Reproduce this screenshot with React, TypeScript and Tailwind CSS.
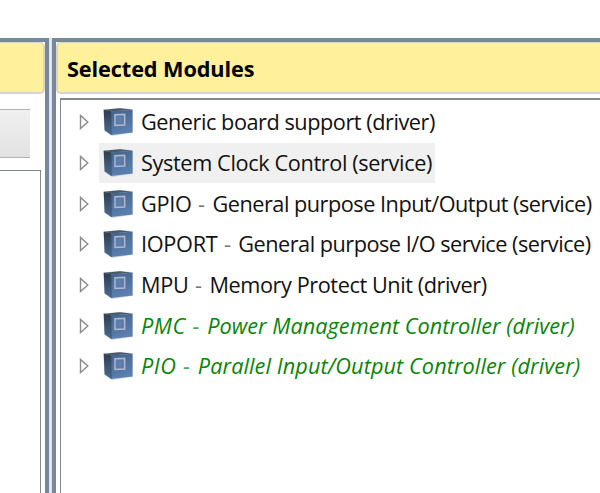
type Module = { code?: string; name: string; tracking: string; selected?: boolean; dependency?: boolean };

const modules: Module[] = [
  { name: "Generic board support (driver)", tracking: "tracking-[-0.46px]" },
  { name: "System Clock Control (service)", tracking: "tracking-[-0.37px]", selected: true },
  { code: "GPIO", name: "General purpose Input/Output (service)", tracking: "tracking-[-0.49px]" },
  { code: "IOPORT", name: "General purpose I/O service (service)", tracking: "tracking-[-0.5px]" },
  { code: "MPU", name: "Memory Protect Unit (driver)", tracking: "tracking-[-0.42px]" },
  { code: "PMC", name: "Power Management Controller (driver)", tracking: "tracking-[0.02px]", dependency: true },
  { code: "PIO", name: "Parallel Input/Output Controller (driver)", tracking: "tracking-[0.08px]", dependency: true },
];

function Expander() {
  return (
    <svg className="block h-4 w-[10px] shrink-0" viewBox="0 0 10 16">
      <path d="M1.5 1.4V14.5L8.8 7.9Z" fill="#fff" stroke="#8c8c8c" strokeWidth="1.4" />
    </svg>
  );
}

function ModuleIcon() {
  return (
    <svg className="block h-[30px] w-[30px] shrink-0" viewBox="0 0 30 30">
      <defs>
        <linearGradient id="front" x1="0" y1="0" x2="0.3" y2="1">
          <stop offset="0" stopColor="#42638b" />
          <stop offset="1" stopColor="#5b80b0" />
        </linearGradient>
        <linearGradient id="side" x1="0" y1="0" x2="0" y2="1">
          <stop offset="0" stopColor="#303d4e" />
          <stop offset="1" stopColor="#496b93" />
        </linearGradient>
      </defs>
      <path d="M0.4 2.4L17 0.8L30 2.2V25.8L9 29L1.3 24Z" fill="#aeb9c6" opacity=".6" />
      <path d="M0.7 2.8L17 1.3L29.4 2.7L8 4.6Z" fill="#4a5868" />
      <path d="M0.7 2.8L8.2 4.2V28L1.6 23.2Z" fill="url(#side)" />
      <path d="M8 4.3L29.5 2.7V25.4L8 28.1Z" fill="url(#front)" />
      <path d="M8.2 5V27.5" stroke="#3b5675" strokeWidth=".8" />
      <path d="M11.9 7.7L21.7 7.2V18L11.9 18.5Z" fill="#6484b0" stroke="#b0b7cf" strokeWidth="1.4" />
      <path d="M14 9.9L19.7 9.6V15.9L14 16.2Z" fill="#5c80b0" stroke="#58739d" strokeWidth=".8" />
    </svg>
  );
}

function ModuleRow({ code, name, tracking, selected, dependency }: Module) {
  return (
    <li className="flex h-[40.67px] items-center pl-[17px]">
      <Expander />
      <div className={`ml-[10px] flex h-full items-center pl-1 ${selected ? "bg-[#f0f0f0] pr-[3px]" : ""}`}>
        <ModuleIcon />
        <div className={`ml-[8px] whitespace-pre text-[21.7px] leading-[40px] ${dependency ? "italic text-[#078507]" : "text-[#111]"}`}>
          {code && (
            <>
              <span className={dependency ? "tracking-[0.5px]" : "tracking-[-0.3px]"}>{code}</span>
              <span className={dependency ? "tracking-[1.15px] text-[#4fa84f]" : "tracking-[0.9px] text-[#777]"}>{" - "}</span>
            </>
          )}
          <span className={tracking}>{name}</span>
        </div>
      </div>
    </li>
  );
}

export default function App() {
  return (
    <div className="h-[493px] w-[600px] overflow-hidden bg-white pt-[38px] font-['Open_Sans','Noto_Sans',sans-serif]">
      <div className="flex h-[455px] bg-[#e3e4eb]">
        <section className="flex w-[49px] shrink-0 flex-col border-r-4 border-t-4 border-[#778899] bg-white">
          <header className="h-[52px] shrink-0 rounded-r-[5px] border-b-2 border-r-2 border-t border-[#d5d5ce] bg-[#fff09c]" />
          <div className="mt-[15px] h-[49px] w-[30px] shrink-0 border-y border-[#b2b2b2] bg-linear-to-b from-[#f0f0f0] to-[#e2e2e2]" />
          <div className="mt-3 w-[41px] flex-1 border-r-[1.5px] border-t-[1.5px] border-[#828790]" />
        </section>
        <section className="ml-[3px] flex min-w-0 flex-1 flex-col border-l-4 border-t-4 border-[#778899] bg-white">
          <header className="flex h-[52px] shrink-0 items-center rounded-l-[5px] border-b-2 border-l-2 border-t border-[#d5d5ce] bg-[#fff09c] pl-[9px]">
            <h1 className="whitespace-nowrap pt-[3px] text-[21.7px] font-bold leading-[40px] tracking-[-0.1px] text-black">Selected Modules</h1>
          </header>
          <ul className="ml-1 mt-1 flex-1 border-l-[1.5px] border-t-2 border-[#828790] pl-px pt-[2px]">
            {modules.map((module) => (
              <ModuleRow key={module.name} {...module} />
            ))}
          </ul>
        </section>
      </div>
    </div>
  );
}
